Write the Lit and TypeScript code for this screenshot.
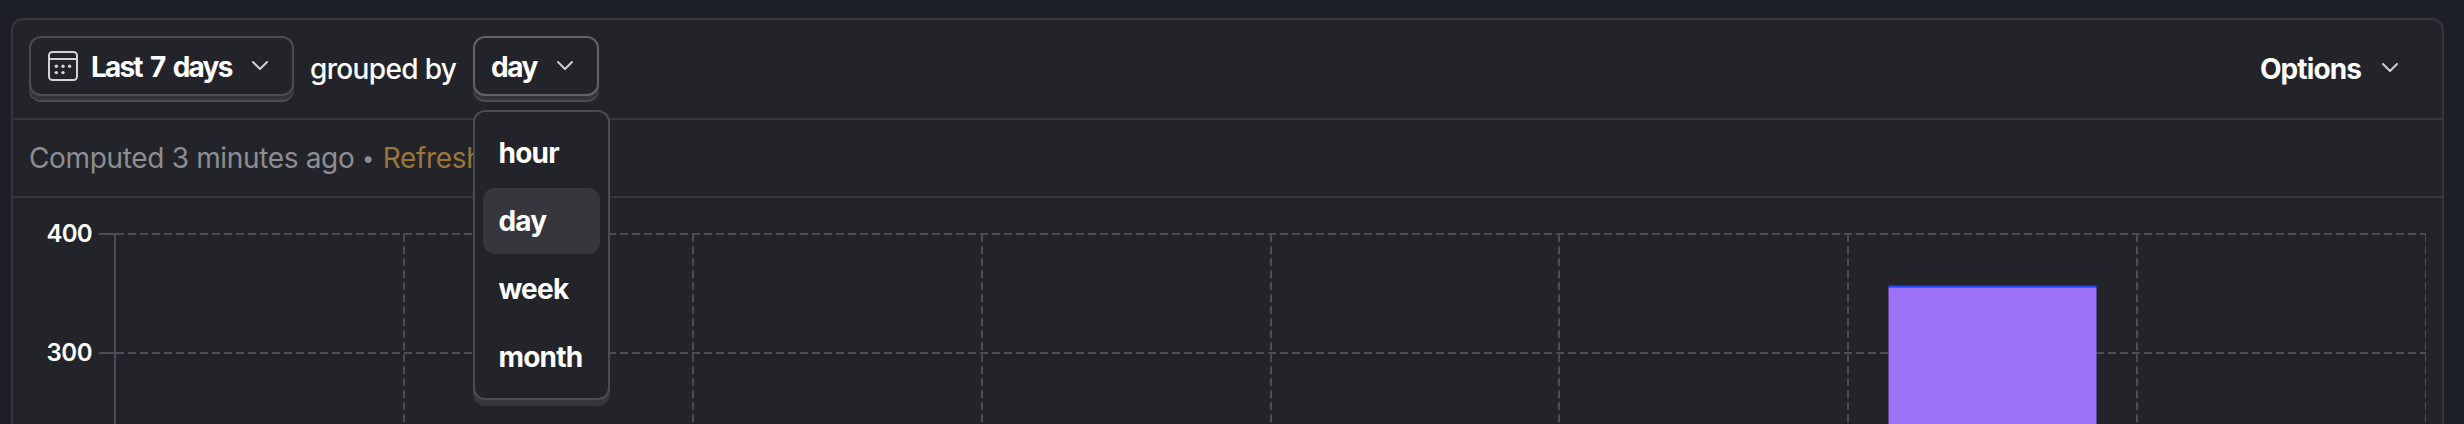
import { LitElement, html, svg, css } from "lit";
import { customElement, property, state } from "lit/decorators.js";

@customElement("chevron-icon")
class ChevronIcon extends LitElement {
  static styles = css`
    :host { display: block; width: 16px; height: 10px; }
    svg { display: block; overflow: visible; }
  `;
  render() {
    return html`<svg width="16" height="10" viewBox="0 0 16 10" fill="none">
      <path d="M1 1 L8 8 L15 1" stroke="#d0d0d2" stroke-width="2" stroke-linecap="round" stroke-linejoin="round"/>
    </svg>`;
  }
}

@customElement("calendar-icon")
class CalendarIcon extends LitElement {
  static styles = css`
    :host { display: block; width: 30px; height: 30px; }
    svg { display: block; }
  `;
  render() {
    const dots = [[8.3, 15.2], [15, 15.2], [21.6, 15.2], [8.3, 21.6], [15, 21.6]];
    return html`<svg width="30" height="30" viewBox="0 0 30 30" fill="none">
      <rect x="1" y="1" width="28" height="28" rx="3.5" stroke="#d3d3d5" stroke-width="2"/>
      <path d="M1 8 H29" stroke="#d3d3d5" stroke-width="2"/>
      ${dots.map(([x, y]) => svg`<circle cx=${x} cy=${y} r="1.7" fill="#d3d3d5"/>`)}
    </svg>`;
  }
}

@customElement("insight-chart")
class InsightChart extends LitElement {
  static styles = css`
    :host { display: block; }
    svg { display: block; }
    .tick { font: 600 24px Inter, sans-serif; fill: #fff; }
  `;
  render() {
    const columns = [403, 692, 981, 1270, 1558, 1847, 2136];
    return html`<svg width="2429" height="226" viewBox="13 198 2429 226">
      <g stroke="#4b4c55" stroke-width="2" fill="none">
        ${[234, 353].map((y) => svg`
          <path d="M99 ${y} H116"/>
          <path d="M116 ${y} H2426" stroke-dasharray="8 4"/>`)}
        ${columns.map((x) => svg`<path d="M${x + 1} 234.3 V424" stroke-dasharray="8 4"/>`)}
        <path d="M2425.5 234.3 V424" stroke-width="1" stroke-dasharray="8 4"/>
        <path d="M115 234 V424"/>
      </g>
      <rect x="1888.5" y="285.5" width="208" height="2" fill="#1d4aff"/>
      <rect x="1888.5" y="287.5" width="208" height="137" fill="#9d72f9"/>
      <text class="tick" x="92.5" y="242" text-anchor="end" textLength="46">400</text>
      <text class="tick" x="92.5" y="360.5" text-anchor="end" textLength="46">300</text>
    </svg>`;
  }
}

@customElement("app-root")
class AppRoot extends LitElement {
  @property({ type: Number }) minutes = 3;
  @state() interval = "day";

  static styles = css`
    :host {
      display: block; box-sizing: border-box; height: 424px; overflow: hidden;
      padding: 18px 20px 0 11px; background: #1d1f27; color: #fff;
      font: 400 28px/40px Inter, "Liberation Sans", sans-serif;
    }
    * { box-sizing: border-box; }
    .panel {
      height: 440px; border: 2px solid #35363b; border-radius: 12px;
      background: #232429; overflow: hidden;
    }
    .header {
      display: flex; align-items: flex-start; height: 100px;
      padding: 16px 44px 0 16px; border-bottom: 2px solid #35363b;
      white-space: nowrap;
    }
    .button {
      position: relative; display: flex; align-items: center; height: 60px;
      border: 2px solid #4b4c51; border-radius: 12px; background: #232429;
      font-weight: 650; box-shadow: 0 4px 0 #353535, 0 6px 0 #4b4c51;
    }
    .range { width: 265px; padding: 1px 24px 0 17px; }
    .range calendar-icon { margin: -2px 13px 0 0; }
    .interval { width: 126px; padding: 1px 24px 0 16px; border-color: #626368; }
    .button chevron-icon { margin: -2px 0 0 auto; }
    .range-label { letter-spacing: -1.8px; word-spacing: 3.4px; }
    .day-label { letter-spacing: -1.5px; }
    .between { width: 179px; padding: 13px 0 0 16px; letter-spacing: -0.65px; font-weight: 500; }
    .options { display: flex; margin-left: auto; padding-top: 13px; font-weight: 650; letter-spacing: -0.9px; }
    .options chevron-icon { margin: 14px 0 0 21px; }
    .anchor { position: relative; }
    .menu {
      position: absolute; z-index: 2; left: 0; top: 74px; width: 137px; height: 290px;
      padding: 8px; border: 2px solid #4b4c51; border-radius: 12px;
      background: #232429; box-shadow: 0 6px 0 #36373c;
      display: flex; flex-direction: column; gap: 2px;
    }
    .item {
      height: 66px; padding: 13px 0 0 15.5px; border-radius: 12px;
      font-weight: 650; letter-spacing: -0.8px;
    }
    .selected { background: #36373c; }
    .computed {
      display: flex; height: 78px; padding: 18px 0 0 16px;
      border-bottom: 2px solid #35363b; color: #8d8e91; white-space: pre;
      font-weight: 440; letter-spacing: -0.34px;
    }
    .dot { font-size: 22px; letter-spacing: 0; }
    .refresh { color: #9c7639; margin-left: 1px; }
  `;

  render() {
    return html`<div class="panel">
      <div class="header">
        <div class="button range">
          <calendar-icon></calendar-icon><span class="range-label">Last 7 days</span><chevron-icon></chevron-icon>
        </div>
        <div class="between">grouped by</div>
        <div class="anchor">
          <div class="button interval"><span class="day-label">${this.interval}</span><chevron-icon></chevron-icon></div>
          <div class="menu">
            ${["hour", "day", "week", "month"].map((name) => html`<div class="item ${name === this.interval ? "selected" : ""}">${name}</div>`)}
          </div>
        </div>
        <div class="options"><span>Options</span><chevron-icon></chevron-icon></div>
      </div>
      <div class="computed"><span>Computed ${this.minutes} minutes ago </span><span class="dot">•</span><span class="refresh"> Refresh</span></div>
      <insight-chart></insight-chart>
    </div>`;
  }
}
